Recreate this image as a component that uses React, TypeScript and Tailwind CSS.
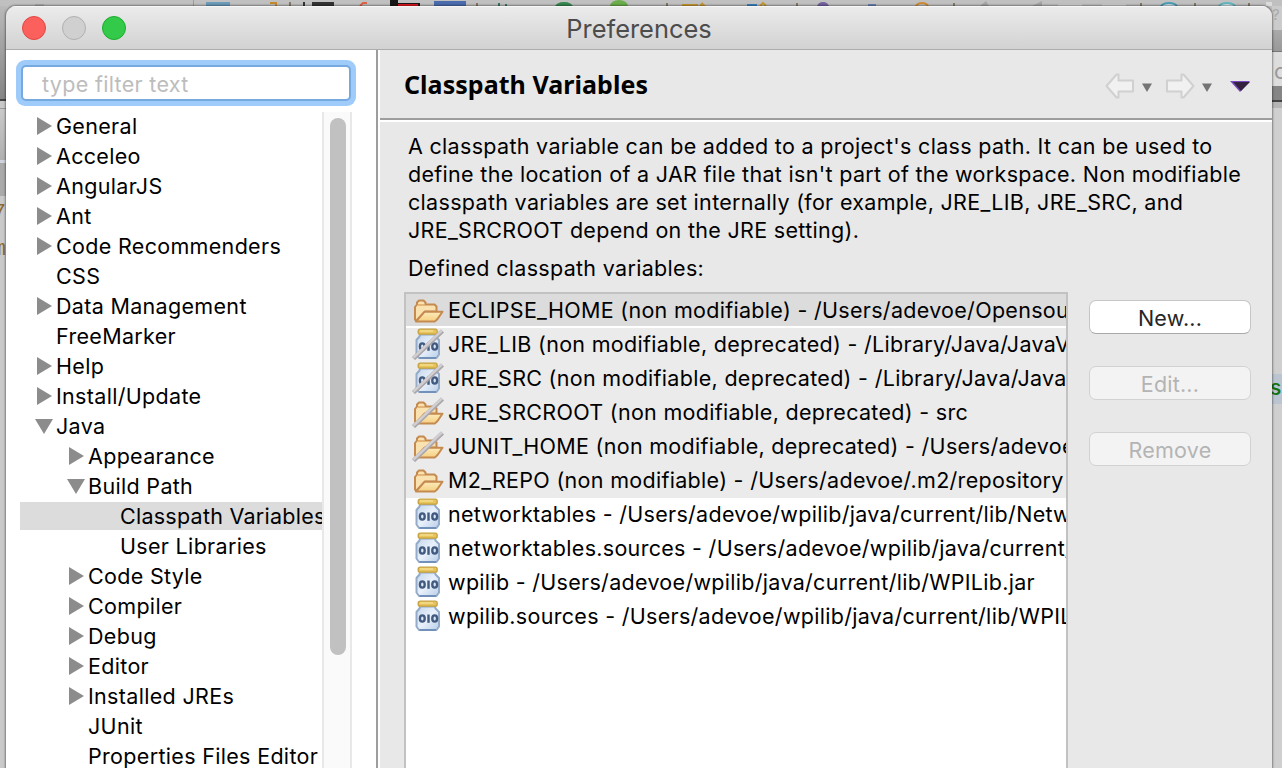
import type { ReactNode } from "react";

type Kind = "closed" | "open" | "leaf";
type Node = { label: string; kind: Kind; depth: number; selected?: boolean };

const tree: Node[] = [
  { label: "General", kind: "closed", depth: 0 },
  { label: "Acceleo", kind: "closed", depth: 0 },
  { label: "AngularJS", kind: "closed", depth: 0 },
  { label: "Ant", kind: "closed", depth: 0 },
  { label: "Code Recommenders", kind: "closed", depth: 0 },
  { label: "CSS", kind: "leaf", depth: 0 },
  { label: "Data Management", kind: "closed", depth: 0 },
  { label: "FreeMarker", kind: "leaf", depth: 0 },
  { label: "Help", kind: "closed", depth: 0 },
  { label: "Install/Update", kind: "closed", depth: 0 },
  { label: "Java", kind: "open", depth: 0 },
  { label: "Appearance", kind: "closed", depth: 1 },
  { label: "Build Path", kind: "open", depth: 1 },
  { label: "Classpath Variables", kind: "leaf", depth: 2, selected: true },
  { label: "User Libraries", kind: "leaf", depth: 2 },
  { label: "Code Style", kind: "closed", depth: 1 },
  { label: "Compiler", kind: "closed", depth: 1 },
  { label: "Debug", kind: "closed", depth: 1 },
  { label: "Editor", kind: "closed", depth: 1 },
  { label: "Installed JREs", kind: "closed", depth: 1 },
  { label: "JUnit", kind: "leaf", depth: 1 },
  { label: "Properties Files Editor", kind: "leaf", depth: 1 },
];

const indents = ["pl-[14px]", "pl-[46px]", "pl-[78px]"];

type Variable = { text: string; icon: "folder" | "jar"; deprecated?: boolean; fixed?: boolean; selected?: boolean };

const variables: Variable[] = [
  { text: "ECLIPSE_HOME (non modifiable) - /Users/adevoe/Opensource", icon: "folder", fixed: true, selected: true },
  { text: "JRE_LIB (non modifiable, deprecated) - /Library/Java/JavaVirtualMachines", icon: "jar", deprecated: true, fixed: true },
  { text: "JRE_SRC (non modifiable, deprecated) - /Library/Java/JavaVirtualMachines", icon: "jar", deprecated: true, fixed: true },
  { text: "JRE_SRCROOT (non modifiable, deprecated) - src", icon: "folder", deprecated: true, fixed: true },
  { text: "JUNIT_HOME (non modifiable, deprecated) - /Users/adevoe", icon: "folder", deprecated: true, fixed: true },
  { text: "M2_REPO (non modifiable) - /Users/adevoe/.m2/repository", icon: "folder", fixed: true },
  { text: "networktables - /Users/adevoe/wpilib/java/current/lib/NetworkTables.jar", icon: "jar" },
  { text: "networktables.sources - /Users/adevoe/wpilib/java/current/lib", icon: "jar" },
  { text: "wpilib - /Users/adevoe/wpilib/java/current/lib/WPILib.jar", icon: "jar" },
  { text: "wpilib.sources - /Users/adevoe/wpilib/java/current/lib/WPILib-sources.jar", icon: "jar" },
];

function Arrow({ kind }: { kind: Kind }) {
  return (
    <svg className="h-[30px] w-[22px] shrink-0" viewBox="0 0 22 30">
      {kind === "closed" && <path d="M3 6v18l15-9z" fill="#8c8c8c" />}
      {kind === "open" && <path d="M1 8h18L10 23z" fill="#8c8c8c" />}
    </svg>
  );
}

function Slash() {
  return (
    <g>
      <path d="M1.5 30.5L30.5 3" stroke="#aaa6aa" strokeWidth="4.4" />
      <path d="M1.5 29.6L30 2.4" stroke="#d2cfd3" strokeWidth="2.4" />
    </g>
  );
}

function FolderIcon({ deprecated }: { deprecated?: boolean }) {
  return (
    <svg className="h-8 w-8 shrink-0" viewBox="0 0 32 32">
      <defs>
        <linearGradient id="folder-front" x1="0" y1="0" x2="0" y2="1">
          <stop offset="0" stopColor="#fcebbb" />
          <stop offset="1" stopColor="#f6cf80" />
        </linearGradient>
      </defs>
      <path d="M3 25.5V13L5 10.5V8.5L7 6.5H11.5L13.5 8.5V10.5H22.5L24.5 12.5V17.5H13L4 27Z" fill="#fae2b0" stroke="#c58a50" strokeWidth="2" strokeLinejoin="round" />
      <path d="M6 11H13" stroke="#dfab69" strokeWidth="1.6" />
      <path d="M4 27.4L12.5 17.8H30.5L25.5 25L23 27.4Z" fill="url(#folder-front)" stroke="#c58a50" strokeWidth="2" strokeLinejoin="round" />
      {deprecated && <Slash />}
    </svg>
  );
}

function JarIcon({ deprecated }: { deprecated?: boolean }) {
  return (
    <svg className="h-8 w-8 shrink-0" viewBox="0 0 32 32">
      <defs>
        <linearGradient id="jar-glass" x1="0" y1="0" x2="1" y2="1">
          <stop offset="0" stopColor="#c3d5ec" />
          <stop offset=".5" stopColor="#e9f1fb" />
          <stop offset="1" stopColor="#b9cee8" />
        </linearGradient>
      </defs>
      <path d="M8 6.5H23L23.5 8.5L27 12V26.5L24.5 30H7L4.5 26.5V12L7.5 8.5Z" fill="url(#jar-glass)" stroke="#94acc9" strokeWidth="2" strokeLinejoin="round" />
      <path d="M7.5 30H24" stroke="#6f8eb8" strokeWidth="1.8" />
      <rect x="6.2" y="1.2" width="19" height="5" rx="2" fill="#e8c45c" stroke="#c6a140" strokeWidth="1.3" />
      <path d="M8 3H21" stroke="#f4df8c" strokeWidth="1.5" />
      <g fill="none" stroke="#435a80" strokeWidth="2.4">
        <ellipse cx="10.3" cy="18.5" rx="2.4" ry="3.1" />
        <path d="M16.5 14.5V22.8" />
        <ellipse cx="22.7" cy="18.5" rx="2.4" ry="3.1" />
      </g>
      {deprecated && <Slash />}
    </svg>
  );
}

function Button({ children, disabled }: { children: ReactNode; disabled?: boolean }) {
  return (
    <button
      disabled={disabled}
      className={
        disabled
          ? "flex h-[34px] w-[162px] items-center justify-center rounded-[7px] border border-[#d2d2d2] bg-[#f3f3f3] pt-px leading-[28px] tracking-[0.2px] text-[#b4b4b4]"
          : "flex h-[34px] w-[162px] items-center justify-center rounded-[7px] border border-[#c6c6c6] border-b-[#a9a9a9] bg-white pt-px leading-[28px] tracking-[0.2px] text-[#262626]"
      }
    >
      {children}
    </button>
  );
}

function HistoryArrow({ forward }: { forward?: boolean }) {
  return (
    <svg className="h-[28px] w-[32px]" viewBox="0 0 32 28">
      <path
        d={forward ? "M3 8.5H17.5V2.5H19.5L29.5 14L19.5 25.5H17.5V19.5H3Z" : "M29 8.5H14.5V2.5H12.5L2.5 14L12.5 25.5H14.5V19.5H29Z"}
        fill="#f1f1f1"
        stroke="#d0d0d0"
        strokeWidth="2"
        strokeLinejoin="round"
      />
    </svg>
  );
}

function Caret() {
  return (
    <svg className="h-[9px] w-[10px]" viewBox="0 0 10 9">
      <path d="M0 .5H10L5 9Z" fill="#747474" />
    </svg>
  );
}

function ToolbarStrip() {
  return (
    <svg className="absolute left-0 top-0 h-[6px] w-[1282px]" viewBox="0 0 1282 6">
      <rect width="1282" height="6" fill="#c0c0c0" />
      <rect x="35" y="4" width="9" height="2" fill="#aaa" />
      <rect x="193" width="1" height="6" fill="#9d9d9d" />
      <rect x="206" y="2" width="24" height="4" fill="#6b9cba" />
      <path d="M270 3h6v3" fill="none" stroke="#c48a2c" strokeWidth="2" />
      <path d="M290 2v4" stroke="#857962" strokeWidth="2" />
      <path d="M303 2h2v4h-2zM312 2h22v4h-22z" fill="#333" />
      <path d="M360 6l3-3h4" fill="none" stroke="#dd6346" strokeWidth="2" />
      <path d="M390 0h8v3h22v3h-30z" fill="#171717" />
      <path d="M398 4h20v2h-20z" fill="#e5161d" />
      <rect x="434" y="1" width="32" height="5" fill="#4b6cae" />
      <path d="M499 3v3M506 4v2" stroke="#3b7663" strokeWidth="2" />
      <ellipse cx="564" cy="7" rx="9" ry="5" fill="#378851" />
      <ellipse cx="619" cy="6" rx="9" ry="6" fill="#6cae4b" />
      <path d="M682 4h16v2h-16zM702 2l4 4h-7z" fill="#c99a32" />
      <path d="M747 4h10v2h-10z" fill="#3b83c6" />
      <path d="M760 6l3-3 3 3" fill="none" stroke="#c99a32" strokeWidth="2" />
      <ellipse cx="823" cy="7" rx="6" ry="5" fill="#7562a1" />
      <rect x="868" y="4" width="8" height="2" fill="#6983b5" />
      <ellipse cx="922" cy="7" rx="6" ry="4" fill="none" stroke="#cf8c37" strokeWidth="2" />
      <path d="M980 6l6-5 3 5M1032 6l10-5v5" fill="#a5a5a5" />
      <path d="M1058 4h24v2h-24zM1102 4h24v2h-24z" fill="#d3d3d3" />
      <ellipse cx="1169" cy="7" rx="8" ry="4" fill="#d0e4ea" stroke="#4b9db5" strokeWidth="2" />
      <ellipse cx="1227" cy="7" rx="8" ry="4" fill="#d5e8ea" stroke="#62b5bf" strokeWidth="2" />
      <path d="M477 3v3M667 3v3M797 3v3M954 3v3M1141 3v3M1195 3v3M1249 3v3" stroke="#857962" strokeWidth="2" />
      <rect x="1266" y="2" width="6" height="4" fill="#dcdcdc" />
    </svg>
  );
}

function EditorLeft() {
  return (
    <div className="flex h-full w-[6px] shrink-0 flex-col overflow-hidden bg-[#c9c9c9] font-['Liberation_Mono'] text-[22px] text-[#8b6a37]">
      <div className="h-[99px] bg-linear-to-b from-[#bdbdbd] to-[#858585]" />
      <div className="h-[2px] bg-[#454545]" />
      <div className="h-[7px] bg-[#c9c9c9]" />
      <div className="h-[52px] border-t border-[#999] bg-linear-to-b from-[#c9c9c9] to-[#b0b0b0]" />
      <div className="h-[3px] bg-[#d0d4dc]" />
      <div className="h-[33px] bg-[#aaa]" />
      <div className="flex h-[36px] items-center justify-end leading-none">7</div>
      <div className="flex h-[36px] items-center justify-end leading-none">m</div>
    </div>
  );
}

function EditorRight() {
  return (
    <div className="flex h-full w-[10px] shrink-0 flex-col overflow-hidden bg-[#cfcfcf] font-['Inter']">
      <div className="h-[30px] bg-[#cbcbcb] text-[15px] leading-[30px] text-[#aaa]">?</div>
      <div className="h-[22px] border-b border-[#777] bg-linear-to-b from-[#aaa] to-[#999]" />
      <div className="h-[34px] bg-[#ddd] pl-[2px] text-[22px] leading-[38px] text-[#999]">c</div>
      <div className="h-[14px] bg-[#858585]" />
      <div className="h-[2px] bg-[#444]" />
      <div className="h-[6px] bg-[#b5b5b5]" />
      <div className="h-[266px] bg-[#cfcfcf]" />
      <div className="-ml-[2px] h-[30px] bg-[#bbc5d1] text-[21px] leading-[27px] font-medium text-[#137313]">s</div>
    </div>
  );
}

export default function App() {
  return (
    <div className="relative flex h-[768px] w-[1282px] overflow-hidden bg-[#bfbfbf] font-['Inter','Liberation_Sans',sans-serif] text-[21.5px] text-black">
      <EditorLeft />
      <div className="z-10 flex min-w-0 flex-1 flex-col pt-[6px]">
        <div className="flex min-h-0 flex-1 flex-col overflow-hidden rounded-t-[10px] shadow-[0_0_2px_1px_rgba(0,0,0,0.38)]">
          <header className="grid h-[44px] shrink-0 grid-cols-[1fr_auto_1fr] items-center border-b border-[#acacac] bg-linear-to-b from-[#ececec] to-[#d2d2d2] shadow-[inset_0_1px_0_#f7f7f7]">
            <div className="flex gap-4 pl-4">
              <i className="size-6 rounded-full border border-[#df4744] bg-[#fc605c]" />
              <i className="size-6 rounded-full border border-[#b0b0b0] bg-[#d0d0d0]" />
              <i className="size-6 rounded-full border border-[#1aac2c] bg-[#34ca49]" />
            </div>
            <h1 className="pt-[2px] text-[25.4px] leading-[40px] text-[#4c4c4c]">Preferences</h1>
            <div />
          </header>
          <div className="flex min-h-0 flex-1">
            <aside className="flex w-[370px] shrink-0 flex-col bg-white pl-[10px] pt-[10px]">
              <div className="h-[46px] w-[340px] shrink-0 rounded-[9px] bg-[#9ecbfa] p-[5px]">
                <input
                  className="h-9 w-full rounded-[5px] border-2 border-[#76a9df] bg-white pl-[19px] pt-[2px] tracking-[0.32px] outline-none placeholder:text-[#bdbdbd]"
                  placeholder="type filter text"
                />
              </div>
              <div className="ml-1 mt-[6px] flex min-h-0 flex-1">
                <ul className="-mt-px w-[302px] overflow-hidden">
                  {tree.map((n) => (
                    <li key={n.label} className={"flex h-[30px] items-center whitespace-nowrap " + indents[n.depth]}>
                      {n.selected ? (
                        <div className="-ml-[78px] flex h-7 w-[302px] shrink-0 items-center overflow-hidden bg-[#dcdcdc] pl-[78px]">
                          <Arrow kind="leaf" />
                          <span className="tracking-[0.26px]">{n.label}</span>
                        </div>
                      ) : (
                        <>
                          <Arrow kind={n.kind} />
                          <span className="tracking-[0.32px]">{n.label}</span>
                        </>
                      )}
                    </li>
                  ))}
                </ul>
                <div className="w-[30px] border-x-2 border-[#e8e8e8] bg-[#fafafa] pl-[6px] pt-[6px]">
                  <div className="h-[537px] w-4 rounded-full bg-[#c1c1c1]" />
                </div>
              </div>
            </aside>
            <div className="w-[2px] shrink-0 bg-[#9d9d9d]" />
            <div className="w-[2px] shrink-0 bg-white" />
            <main className="flex min-w-0 flex-1 flex-col bg-[#e8e8e8]">
              <div className="flex h-[70px] shrink-0 items-center border-b-2 border-[#9d9d9d] pl-6 pr-[22px]">
                <h2 className="flex-1 pb-px font-['Noto_Sans'] text-[25px] font-bold leading-[34px] tracking-[0.05px]">Classpath Variables</h2>
                <div className="flex items-center pt-[4px]">
                  <HistoryArrow />
                  <span className="ml-[6px] pt-[3px]"><Caret /></span>
                  <span className="ml-[12px]"><HistoryArrow forward /></span>
                  <span className="ml-[6px] pt-[3px]"><Caret /></span>
                  <svg className="ml-[18px] mt-px h-[11px] w-[20px]" viewBox="0 0 20 11">
                    <path d="M0 0H20L10 11Z" fill="#7a48c0" />
                    <path d="M3 1H20L11 10Z" fill="#33213e" />
                  </svg>
                </div>
              </div>
              <div className="h-[2px] shrink-0 bg-white" />
              <p className="whitespace-pre pl-7 pt-[10px] leading-[28px] tracking-[0.31px]">
                {"A classpath variable can be added to a project's class path. It can be used to\ndefine the location of a JAR file that isn't part of the workspace. Non modifiable\nclasspath variables are set internally (for example, JRE_LIB, JRE_SRC, and\nJRE_SRCROOT depend on the JRE setting)."}
              </p>
              <p className="pl-7 pt-[10px] leading-[28px] tracking-[0.31px]">Defined classpath variables:</p>
              <div className="mt-[10px] flex min-h-0 flex-1 gap-[21px] pl-6">
                <ul className="w-[664px] shrink-0 overflow-hidden border-x-2 border-t-2 border-[#c2c2c2] bg-white">
                  {variables.map((v) => (
                    <li
                      key={v.text}
                      className={
                        "flex h-[34px] items-center whitespace-nowrap pl-[6px] " +
                        (v.selected ? "border-b-2 border-white bg-[#dcdcdc]" : v.fixed ? "bg-[#ebebeb] pb-[2px]" : "bg-white pb-[2px]")
                      }
                    >
                      {v.icon === "folder" ? <FolderIcon deprecated={v.deprecated} /> : <JarIcon deprecated={v.deprecated} />}
                      <span className="ml-[4px] tracking-[0.3px]">{v.text}</span>
                    </li>
                  ))}
                </ul>
                <div className="flex flex-col gap-8 pt-2">
                  <Button>New...</Button>
                  <Button disabled>Edit...</Button>
                  <Button disabled>Remove</Button>
                </div>
              </div>
            </main>
          </div>
        </div>
      </div>
      <EditorRight />
      <ToolbarStrip />
    </div>
  );
}
